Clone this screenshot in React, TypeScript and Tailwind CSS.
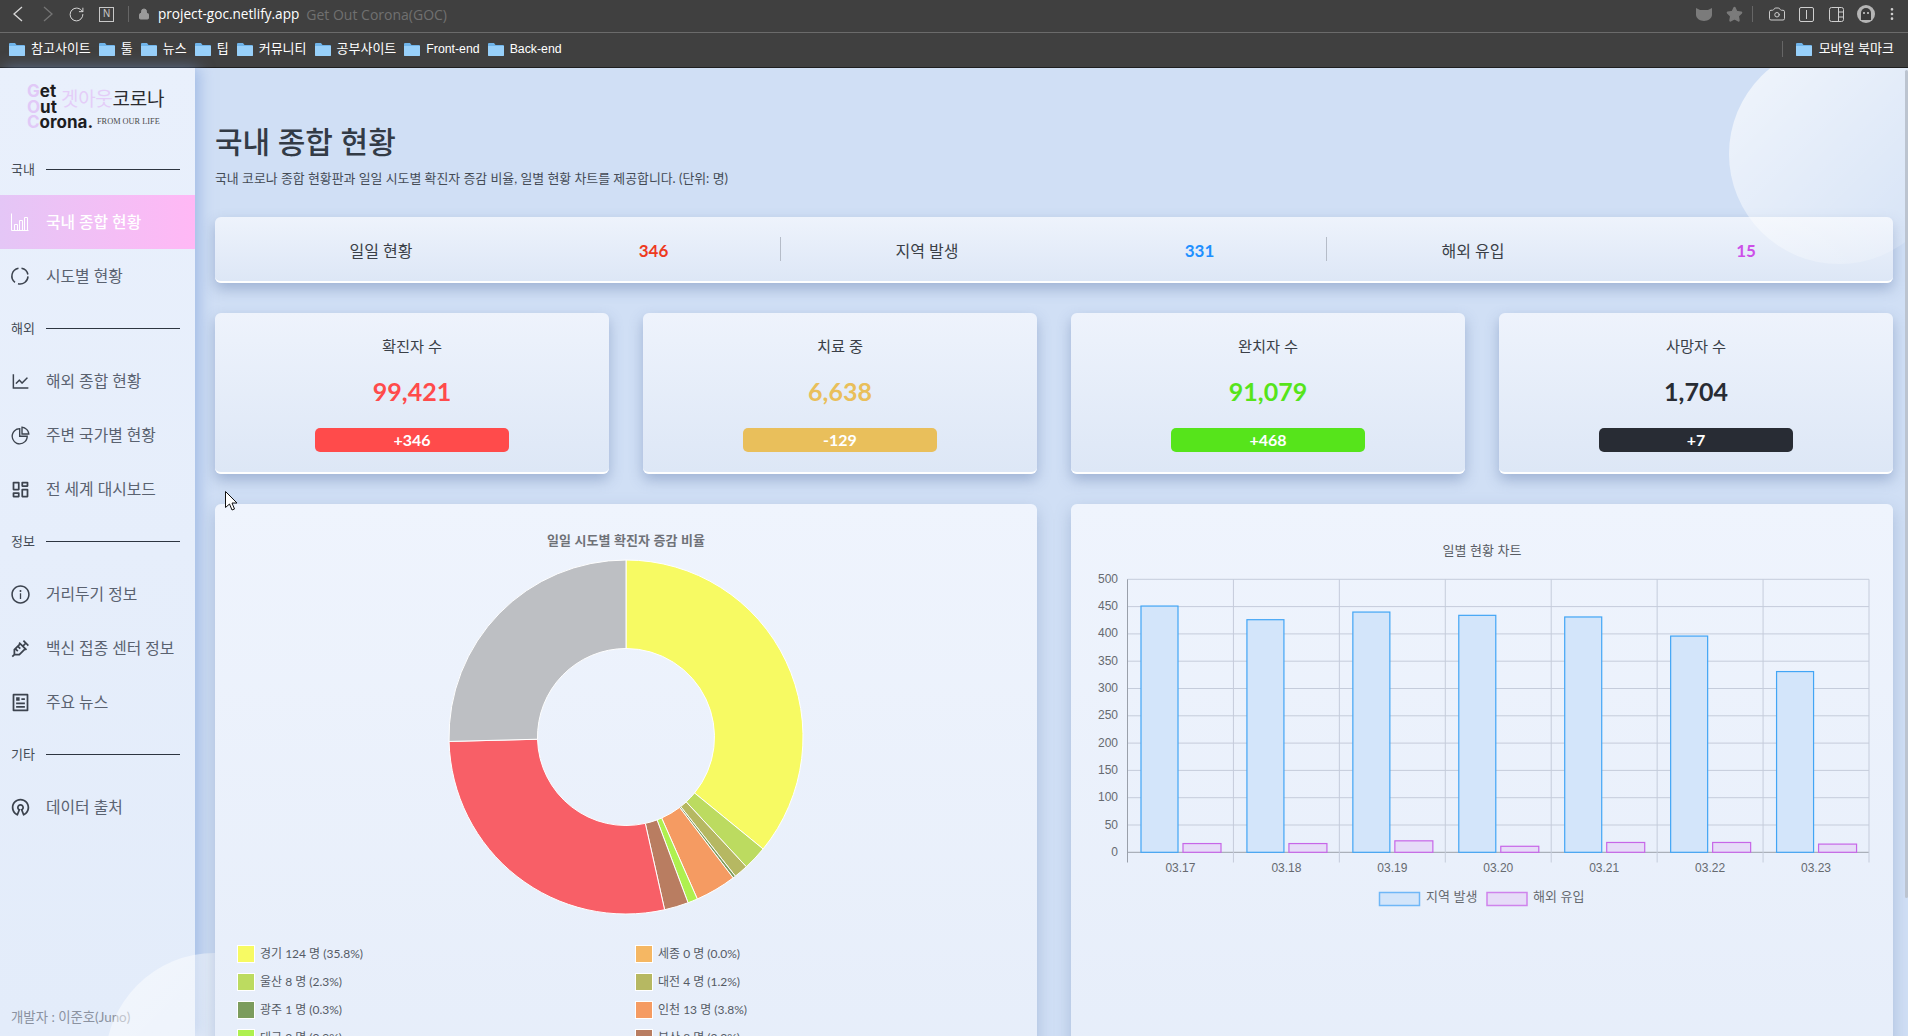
import { Camera, EllipsisVertical, Lock, RotateCw, Star } from "lucide-react";
import { AiOutlineInfoCircle, AiOutlineLineChart, AiOutlinePieChart } from "react-icons/ai";
import { RiArticleLine, RiDashboardLine, RiOpenSourceLine, RiSyringeLine } from "react-icons/ri";

/* ---------------------------------- DATA ---------------------------------- */

const bookmarks = ["참고사이트", "툴", "뉴스", "팁", "커뮤니티", "공부사이트", "Front-end", "Back-end"];

const summary = [
  { label: "일일 현황", value: "346", color: "text-[#ee3a1e]" },
  { label: "지역 발생", value: "331", color: "text-[#1e90ff]" },
  { label: "해외 유입", value: "15", color: "text-[#cc4fe8]" },
];

const stats = [
  { label: "확진자 수", value: "99,421", delta: "+346", text: "text-[#ff4b4b]", bg: "bg-[#ff4b4b]" },
  { label: "치료 중", value: "6,638", delta: "-129", text: "text-[#e9bf5b]", bg: "bg-[#e9bf5b]" },
  { label: "완치자 수", value: "91,079", delta: "+468", text: "text-[#56e41b]", bg: "bg-[#56e41b]" },
  { label: "사망자 수", value: "1,704", delta: "+7", text: "text-[#282c34]", bg: "bg-[#282c34]" },
];

const slices = [
  { from: 0, to: 35.9, color: "#f7fa63" },
  { from: 35.9, to: 38.1, color: "#bcdb60" },
  { from: 38.1, to: 39.4, color: "#b6b862" },
  { from: 39.4, to: 39.65, color: "#7c9c5d" },
  { from: 39.65, to: 43.4, color: "#f59b62" },
  { from: 43.4, to: 44.3, color: "#aef04f" },
  { from: 44.3, to: 46.5, color: "#b97d61" },
  { from: 46.5, to: 74.6, color: "#f85f67" },
  { from: 74.6, to: 100, color: "#bdbfc3" },
];

const legend = [
  { label: "경기 124 명 (35.8%)", swatch: "bg-[#f7fa63]" },
  { label: "세종 0 명 (0.0%)", swatch: "bg-[#f5b763]" },
  { label: "울산 8 명 (2.3%)", swatch: "bg-[#bcdb60]" },
  { label: "대전 4 명 (1.2%)", swatch: "bg-[#b6b862]" },
  { label: "광주 1 명 (0.3%)", swatch: "bg-[#7c9c5d]" },
  { label: "인천 13 명 (3.8%)", swatch: "bg-[#f59b62]" },
  { label: "대구 3 명 (0.9%)", swatch: "bg-[#aef04f]" },
  { label: "부산 8 명 (2.3%)", swatch: "bg-[#b97d61]" },
];

const daily = [
  { date: "03.17", local: 451, abroad: 16 },
  { date: "03.18", local: 426, abroad: 16 },
  { date: "03.19", local: 440, abroad: 21 },
  { date: "03.20", local: 434, abroad: 11 },
  { date: "03.21", local: 431, abroad: 18 },
  { date: "03.22", local: 396, abroad: 18 },
  { date: "03.23", local: 331, abroad: 15 },
];

/* --------------------------------- CHROME --------------------------------- */

function Folder() {
  return (
    <svg width="16" height="13" viewBox="0 0 16 13" className="shrink-0">
      <path d="M0 1a1 1 0 0 1 1-1h5l1.5 2H15a1 1 0 0 1 1 1v9a1 1 0 0 1-1 1H1a1 1 0 0 1-1-1z" fill="#6fb4ea" />
      <path d="M0 3h16v9a1 1 0 0 1-1 1H1a1 1 0 0 1-1-1z" fill="#98d0fa" />
    </svg>
  );
}

function BrowserChrome() {
  return (
    <div className="shrink-0 bg-[#404040] font-['Liberation_Sans','Noto_Sans_CJK_KR',sans-serif]">
      <div className="flex h-[33px] items-center border-b border-[#6b6b6b] pb-[4px] pr-[8px]">
        <svg className="ml-[12px]" width="11" height="16" viewBox="0 0 11 16" fill="none" stroke="#d8d8d8" strokeWidth="1.3">
          <path d="M10 1 2 8l8 7" />
        </svg>
        <svg className="ml-[20px]" width="11" height="16" viewBox="0 0 11 16" fill="none" stroke="#757575" strokeWidth="1.3">
          <path d="m1 1 8 7-8 7" />
        </svg>
        <RotateCw className="ml-[14px] h-[17px] w-[17px] text-[#d8d8d8]" strokeWidth={1.4} />
        <span className="ml-[14px] flex h-[15px] w-[15px] items-center justify-center border border-[#c8c8c8] text-[10px] leading-none text-[#c8c8c8]">N</span>
        <span className="ml-[14px] h-[16px] w-px bg-[#666]" />
        <Lock className="ml-[9px] h-[12px] w-[12px] fill-[#9a9a9a] text-[#9a9a9a]" strokeWidth={2} />
        <span className="ml-[8px] font-['Open_Sans',sans-serif] text-[13.6px] text-white">project-goc.netlify.app</span>
        <span className="ml-[7px] font-['Open_Sans',sans-serif] text-[14px] text-[#707070]">Get Out Corona(GOC)</span>
        <div className="ml-auto flex items-center">
          <svg width="16" height="14" viewBox="0 0 16 14">
            <path d="M0 1l4 2h8l4-2v7c0 3-4 6-8 6s-8-3-8-6z" fill="#7b7b7b" />
          </svg>
          <Star className="ml-[14px] h-[17px] w-[17px] fill-[#7b7b7b] text-[#7b7b7b]" />
          <span className="ml-[9px] h-[16px] w-px bg-[#666]" />
          <Camera className="ml-[15px] h-[18px] w-[18px] text-[#cfcfcf]" strokeWidth={1.3} />
          <span className="ml-[13px] flex h-[15px] w-[15px] items-center justify-center rounded-[2px] border border-[#cfcfcf]">
            <span className="h-[9px] w-px bg-[#cfcfcf]" />
          </span>
          <svg className="ml-[15px]" width="15" height="15" viewBox="0 0 15 15" fill="none" stroke="#cfcfcf">
            <rect x=".5" y=".5" width="14" height="14" rx="2" />
            <path d="M9.5 .5v14M9.5 5h5M9.5 10h5" />
          </svg>
          <svg className="ml-[13px]" width="18" height="18" viewBox="0 0 18 18">
            <circle cx="9" cy="9" r="9" fill="#b5b5b5" />
            <path d="M4 15V8a5 5 0 0 1 10 0v7z" fill="#3a3a3a" />
            <circle cx="7" cy="8" r="1" fill="#cfcfcf" />
            <circle cx="11" cy="8" r="1" fill="#cfcfcf" />
          </svg>
          <EllipsisVertical className="ml-[9px] h-[16px] w-[16px] text-[#cfcfcf]" strokeWidth={2} />
        </div>
      </div>
      <div className="flex h-[35px] items-center border-b border-[#1f1f1f] pb-[2px] pl-[9px] pr-[14px] text-[13px] text-white">
        {bookmarks.map((name) => (
          <div key={name} className="mr-[8px] flex items-center gap-[6px]">
            <Folder />
            <span className={/[a-z]/i.test(name) ? "text-[12.3px]" : "text-[13px]"}>{name}</span>
          </div>
        ))}
        <div className="ml-auto flex items-center">
          <span className="mr-[13px] h-[16px] w-px bg-[#666]" />
          <Folder />
          <span className="ml-[7px]">모바일 북마크</span>
        </div>
      </div>
    </div>
  );
}

/* --------------------------------- SIDEBAR -------------------------------- */

function Section({ label }: { label: string }) {
  return (
    <div className="flex h-[51px] items-center pl-[11px] pr-[15px] text-[13px] text-[#444b55]">
      <span className="w-[35px]">{label}</span>
      <span className="h-px flex-1 bg-[#2d3540]" />
    </div>
  );
}

function NavItem({ icon, label, active }: { icon: React.ReactNode; label: string; active?: boolean }) {
  return (
    <div
      className={
        active
          ? "flex h-[54px] items-center pl-[10px] text-[15.8px] font-medium text-white bg-linear-to-r from-[#e4c6f6] to-[#ffb8f5]"
          : "flex h-[54px] items-center pl-[10px] text-[15.8px] text-[#5a6270]"
      }
    >
      <span className={active ? "w-[36px] text-[21px] text-white" : "w-[36px] text-[21px] text-[#3c434e]"}>{icon}</span>
      <span>{label}</span>
    </div>
  );
}

function BarsIcon() {
  return (
    <svg width="20" height="20" viewBox="0 0 20 20" fill="none" stroke="currentColor" strokeWidth="1">
      <path d="M1.5 1.5v17h17M4.5 18.5v-6h3v6M9.5 18.5v-10h3v10M14.5 18.5v-13h3v13" />
    </svg>
  );
}

function LoadingRing() {
  return (
    <svg width="20" height="20" viewBox="0 0 20 20" fill="none" stroke="currentColor" strokeWidth="1.5">
      <path d="M8.5 2.2A8 8 0 0 0 5 16.4M8 17.8a8 8 0 0 0 10-7.4M17.9 8.5a8 8 0 0 0-6.4-6.3" />
    </svg>
  );
}

function Logo() {
  return (
    <div className="flex h-[76px] flex-col pl-[27px] pt-[15px] text-[#1d1d1f]">
      <div className="flex">
        <div className="w-[34px] text-[17px] font-bold leading-[16px] font-['Inter',sans-serif]">
          <div><span className="text-[#e1c9f7]">G</span>et</div>
          <div><span className="text-[#e1c9f7]">O</span>ut</div>
        </div>
        <div className="text-[19px] leading-[32px] tracking-[-0.3px]">
          <span className="text-[#e4cdf8]">겟아웃</span>
          <span className="text-[#2b2b2f]">코로나</span>
        </div>
      </div>
      <div className="flex items-center">
        <span className="w-[70px] text-[17px] font-bold leading-[14px] font-['Inter',sans-serif]">
          <span className="text-[#e1c9f7]">C</span>orona.
        </span>
        <span className="text-[8.3px] leading-[14px] text-[#4a4a4a] font-['Liberation_Serif',serif]">FROM OUR LIFE</span>
      </div>
    </div>
  );
}

function Sidebar() {
  return (
    <aside className="relative z-10 flex w-[195px] shrink-0 flex-col bg-linear-to-b from-[#e9f0fc] to-[#e3ecfa] shadow-[4px_0_14px_rgba(120,155,215,0.55)]">
      <Logo />
      <Section label="국내" />
      <NavItem active icon={<BarsIcon />} label="국내 종합 현황" />
      <NavItem icon={<LoadingRing />} label="시도별 현황" />
      <Section label="해외" />
      <NavItem icon={<AiOutlineLineChart />} label="해외 종합 현황" />
      <NavItem icon={<AiOutlinePieChart />} label="주변 국가별 현황" />
      <NavItem icon={<RiDashboardLine />} label="전 세계 대시보드" />
      <Section label="정보" />
      <NavItem icon={<AiOutlineInfoCircle />} label="거리두기 정보" />
      <NavItem icon={<RiSyringeLine />} label="백신 접종 센터 정보" />
      <NavItem icon={<RiArticleLine />} label="주요 뉴스" />
      <Section label="기타" />
      <NavItem icon={<RiOpenSourceLine />} label="데이터 출처" />
      <div className="mt-auto pb-[9px] pl-[11px] text-[13.4px] leading-[20px] text-[#8b92a0]">개발자 : 이준호(Juno)</div>
    </aside>
  );
}

/* --------------------------------- CHARTS --------------------------------- */

function arcPath(from: number, to: number, cx: number, cy: number, R: number, r: number) {
  const a0 = (from / 100) * Math.PI * 2 - Math.PI / 2;
  const a1 = (to / 100) * Math.PI * 2 - Math.PI / 2;
  const large = to - from > 50 ? 1 : 0;
  const p = (rad: number, a: number) => `${(cx + rad * Math.cos(a)).toFixed(2)} ${(cy + rad * Math.sin(a)).toFixed(2)}`;
  return `M${p(R, a0)}A${R} ${R} 0 ${large} 1 ${p(R, a1)}L${p(r, a1)}A${r} ${r} 0 ${large} 0 ${p(r, a0)}Z`;
}

function DonutPanel() {
  return (
    <div className="relative z-30 min-h-[700px] rounded-[6px] bg-linear-to-b from-[#eff4fd] to-[#e4ecf9] pt-[28px] shadow-[0_6px_16px_rgba(100,125,170,0.35)]">
      <div className="h-[18px] text-center text-[13px] font-bold leading-[18px] text-[#6f7278] font-['Liberation_Sans','Noto_Sans_CJK_KR',sans-serif]">
        일일 시도별 확진자 증감 비율
      </div>
      <svg className="mx-auto mt-[9px] block" width="356" height="356" viewBox="0 0 356 356">
        {slices.map((s) => (
          <path key={s.from} d={arcPath(s.from, s.to, 178, 178, 177, 88.5)} fill={s.color} stroke="#fff" strokeWidth="1" />
        ))}
      </svg>
      <div className="mt-[25px] grid grid-cols-[398px_1fr] pl-[22px] text-[12px] text-[#555b65]">
        {legend.map((item) => (
          <div key={item.label} className="flex h-[28px] items-center gap-[5px]">
            <span className={`h-[18px] w-[18px] border border-white ${item.swatch}`} />
            <span>{item.label}</span>
          </div>
        ))}
      </div>
    </div>
  );
}

function BarPanel() {
  const left = 56.5;
  const right = 798;
  const top = 75.3;
  const base = 348.3;
  const cat = (right - left) / 7;
  const y = (v: number) => base - (v / 500) * (base - top);
  const ticks = [0, 50, 100, 150, 200, 250, 300, 350, 400, 450, 500];

  return (
    <div className="relative z-30 min-h-[700px] rounded-[6px] bg-linear-to-b from-[#eff4fd] to-[#e4ecf9] shadow-[0_6px_16px_rgba(100,125,170,0.35)]">
      <svg className="block" width="822" height="420" viewBox="0 0 822 420" fontSize="12" fill="#666a70" fontFamily="'Liberation Sans','Noto Sans CJK KR',sans-serif">
        <text x="411" y="51" textAnchor="middle" fontSize="13" fill="#585c63">일별 현황 차트</text>
        {ticks.map((t) => (
          <g key={t}>
            <line x1={left} x2={right} y1={y(t)} y2={y(t)} stroke={t === 0 ? "#9aa0aa" : "#c5ccdb"} />
            <text x={47} y={y(t) + 3.5} textAnchor="end">{t}</text>
          </g>
        ))}
        {[0, 1, 2, 3, 4, 5, 6, 7].map((i) => (
          <line key={i} x1={left + cat * i} x2={left + cat * i} y1={top} y2={358.5} stroke={i === 0 ? "#9aa0aa" : "#c5ccdb"} />
        ))}
        {daily.map((d, i) => {
          const x = left + cat * i;
          return (
            <g key={d.date}>
              <rect x={x + 13.5} y={y(d.local)} width={37} height={base - y(d.local)} fill="#d3e5fa" stroke="#42a5f5" strokeWidth="1.2" />
              <rect x={x + 55.5} y={y(d.abroad)} width={38} height={base - y(d.abroad)} fill="#e6dcf8" stroke="#c766e8" strokeWidth="1.2" />
              <text x={x + cat / 2} y={368} textAnchor="middle">{d.date}</text>
            </g>
          );
        })}
        <rect x="308.5" y="388.5" width="40" height="13" fill="#d3e5fa" stroke="#6fb7f7" strokeWidth="1.5" />
        <text x="355" y="397" fontSize="13">지역 발생</text>
        <rect x="416" y="388.5" width="40" height="13" fill="#e6dcf8" stroke="#cf83ec" strokeWidth="1.5" />
        <text x="462" y="397" fontSize="13">해외 유입</text>
      </svg>
    </div>
  );
}

/* ---------------------------------- MAIN ---------------------------------- */

function Dashboard() {
  return (
    <main className="relative min-h-0 flex-1 overflow-hidden bg-[#d0dff5] pl-[20px] pr-[15px]">
      <div className="absolute right-[-41px] top-[-24px] z-20 h-[220px] w-[220px] rounded-full bg-linear-to-br from-[#ffffffb8] to-[#ffffff11]" />

      <h1 className="pt-[53px] text-[30px] font-medium leading-[40px] text-[#333b46]">국내 종합 현황</h1>
      <p className="mt-[7px] text-[12.9px] leading-[20px] text-[#444b55]">
        국내 코로나 종합 현황판과 일일 시도별 확진자 증감 비율, 일별 현황 차트를 제공합니다. (단위: 명)
      </p>

      <section className="mt-[29px] grid h-[66px] grid-cols-3 items-center rounded-[6px] border-b-2 border-white bg-linear-to-b from-[#eef3fc] to-[#dde7f6] px-[20px] shadow-[0_6px_14px_rgba(100,125,170,0.45)]">
        {summary.map((s, i) => (
          <div key={s.label} className={i < 2 ? "grid h-[24px] grid-cols-[292px_1fr] items-center border-r border-[#b5bcc8] pt-[1px]" : "grid h-[24px] grid-cols-[292px_1fr] items-center pt-[1px]"}>
            <span className="text-center text-[16px] text-[#3a3f47]">{s.label}</span>
            <span className={`text-center text-[17px] font-bold ${s.color}`}>{s.value}</span>
          </div>
        ))}
      </section>

      <section className="mt-[30px] grid grid-cols-4 gap-[34px]">
        {stats.map((s) => (
          <div key={s.label} className="flex h-[161px] flex-col items-center rounded-[6px] border-b-2 border-white bg-linear-to-b from-[#eef3fc] to-[#dde7f6] pt-[22px] shadow-[0_6px_14px_rgba(100,125,170,0.45)]">
            <div className="h-[22px] text-[15.3px] leading-[22px] text-[#3a3f47]">{s.label}</div>
            <div className={`mt-[18px] h-[32px] text-[25px] font-bold leading-[32px] ${s.text}`}>{s.value}</div>
            <div className={`mt-[21px] h-[24px] w-[194px] rounded-[5px] text-center text-[16px] font-bold leading-[24px] text-white ${s.bg}`}>{s.delta}</div>
          </div>
        ))}
      </section>

      <section className="mt-[30px] grid grid-cols-2 gap-[34px]">
        <DonutPanel />
        <BarPanel />
      </section>
    </main>
  );
}

export default function App() {
  return (
    <div className="relative flex h-screen flex-col overflow-hidden font-['Lato','Noto_Sans_CJK_KR',sans-serif]">
      <BrowserChrome />
      <div className="flex min-h-0 flex-1">
        <Sidebar />
        <Dashboard />
      </div>
      {/* decorative circle across the sidebar, cursor and page scrollbar */}
      <div className="absolute left-[105px] top-[953px] z-20 h-[220px] w-[220px] rounded-full bg-linear-to-br from-[#ffffff88] to-[#ffffff33]" />
      <div className="absolute right-0 top-[70px] z-40 h-[828px] w-[3px] rounded-[2px] bg-[#bcc4d0]" />
      <svg className="absolute left-[225px] top-[491px] z-40" width="13" height="20" viewBox="0 0 13 20">
        <path d="M.5.5v16l4-3.5 2.5 6 2.5-1-2.5-6h5z" fill="#fff" stroke="#111" strokeWidth="1" />
      </svg>
    </div>
  );
}
